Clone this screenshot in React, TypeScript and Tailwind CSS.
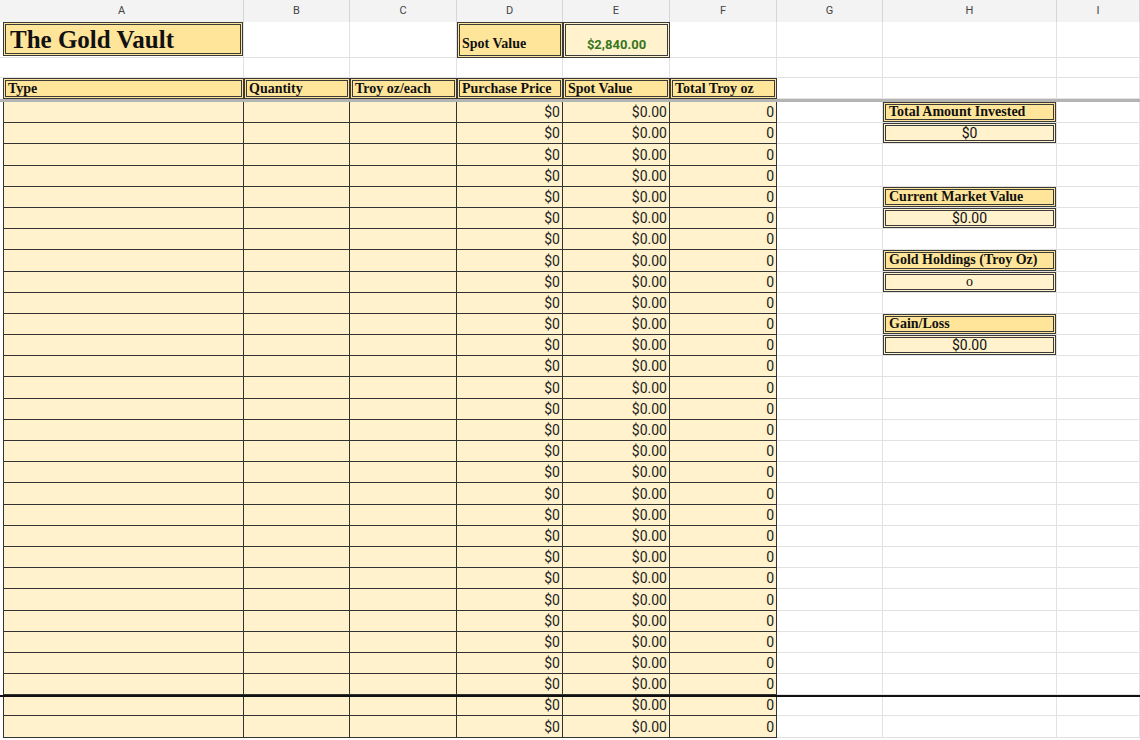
import React from "react";

const cols = "grid grid-cols-[244px_106px_107px_106px_107px_107px_106px_174px_83px] grid-rows-[minmax(0,1fr)] overflow-hidden";
const serif = { fontFamily: '"Liberation Serif", "DejaVu Serif", serif' };
const sans = { fontFamily: 'Roboto, "Liberation Sans", Arial, sans-serif' };

const grid = "border-r border-b border-[#e2e2e2] min-h-0";
const box = "border-[3px] border-double border-[#3a3a3a]";

function sideBox(i: number) {
  const map: Record<number, [string, boolean]> = {
    0: ["Total Amount Invested", true],
    1: ["$0", false],
    4: ["Current Market Value", true],
    5: ["$0.00", false],
    7: ["Gold Holdings (Troy Oz)", true],
    8: ["o", false],
    10: ["Gain/Loss", true],
    11: ["$0.00", false],
  };
  const v = map[i];
  if (!v) return <div className={grid} />;
  const [text, head] = v;
  return (
    <div className={`${grid} overflow-hidden`}>
      <div
        className={`h-full overflow-hidden ${box} ${head ? "bg-[#ffe599] font-bold text-[14px] px-[3px] text-left leading-[14px]" : "bg-[#fff2cc] text-[14px] text-center leading-[14px]"} text-[#111]`}
        style={head || text === "o" ? serif : sans}
      >
        {text}
      </div>
    </div>
  );
}

export default function App() {
  const letters = ["A", "B", "C", "D", "E", "F", "G", "H", "I"];
  const headers = ["Type", "Quantity", "Troy oz/each", "Purchase Price", "Spot Value", "Total Troy oz"];
  const rows = Array.from({ length: 30 }, (_, i) => i);
  const dataCell = "min-h-0 border-r border-b border-[#333] bg-[#fff2cc] text-[14px] text-right pr-[2px] leading-[20px] text-[#222] flex items-end justify-end";

  return (
    <div className="w-[1140px] h-[740px] overflow-hidden bg-white">
      <div className={`${cols} h-[22px] bg-[#f3f3f3] text-[11px] text-[#444]`} style={sans}>
        {letters.map((l) => (
          <div key={l} className="border-r border-[#d6d6d6] flex items-center justify-center">{l}</div>
        ))}
      </div>
      <div className={`${cols} h-[36px]`}>
        <div className={`${grid} pb-[1px] pl-[3px]`}>
          <div className={`h-full ${box} bg-[#ffe599] font-bold text-[25px] px-[4px] leading-[30px] text-[#111]`} style={serif}>
            The Gold Vault
          </div>
        </div>
        <div className={grid} />
        <div className={grid} />
        <div className={`${box} bg-[#ffe599] font-bold text-[14px] flex items-end pl-[2px] pb-[1px] text-[#111]`} style={serif}>Spot Value</div>
        <div className={`${box} bg-[#fff2cc] font-bold text-[13px] flex items-end justify-center pb-[1px] text-[#38761d]`} style={sans}>$2,840.00</div>
        <div className={grid} />
        <div className={grid} />
        <div className={grid} />
        <div className={grid} />
      </div>
      <div className={`${cols} h-[20px]`}>
        {letters.map((l) => <div key={l} className={grid} />)}
      </div>
      <div className={`${cols} h-[24px] border-b-[3px] border-[#b4b4b4]`}>
        {headers.map((h, k) => (
          <div key={h} className={`${box} ${k === 0 ? "ml-[3px]" : ""} bg-[#ffe599] font-bold text-[14px] px-[2px] leading-[16px] text-[#111]`} style={serif}>{h}</div>
        ))}
        <div className={grid} />
        <div className={grid} />
        <div className={grid} />
      </div>
      {rows.map((i) => (
        <div key={i} className={`${cols} h-[21.2px] ${i === 28 ? "border-t-2 border-[#111]" : ""}`} style={sans}>
          <div className={`${dataCell} ml-[3px] border-l`} />
          <div className={dataCell} />
          <div className={dataCell} />
          <div className={dataCell}>$0</div>
          <div className={dataCell}>$0.00</div>
          <div className={dataCell}>0</div>
          <div className={grid} />
          {sideBox(i)}
          <div className={grid} />
        </div>
      ))}
    </div>
  );
}
